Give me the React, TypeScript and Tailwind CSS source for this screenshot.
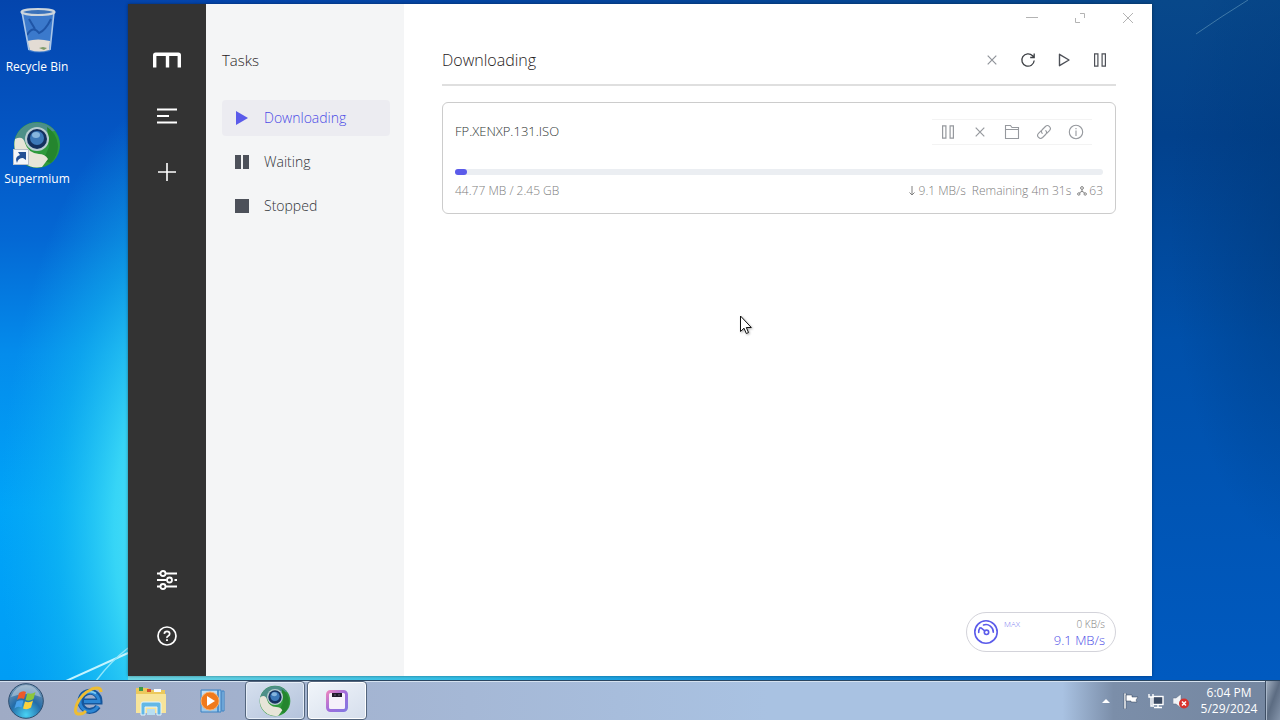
import React from "react";

type IconProps = { className?: string };

const Wallpaper: React.FC = () => (
  <svg
    className="absolute inset-0 size-full"
    viewBox="0 0 1280 680"
    preserveAspectRatio="none"
    aria-hidden="true"
  >
    <defs>
      <linearGradient id="sky" x1="0" y1="0" x2="0" y2="1">
        <stop offset="0" stopColor="#0445ad" />
        <stop offset="0.2" stopColor="#0456c4" />
        <stop offset="0.35" stopColor="#0468d4" />
        <stop offset="0.52" stopColor="#048cec" />
        <stop offset="0.75" stopColor="#00a4f8" />
        <stop offset="1" stopColor="#009df5" />
      </linearGradient>
      <linearGradient id="sky-right" x1="0" y1="0" x2="0" y2="1">
        <stop offset="0" stopColor="#08488a" />
        <stop offset="0.2" stopColor="#02418c" />
        <stop offset="0.5" stopColor="#0050aa" />
        <stop offset="1" stopColor="#005ac0" />
      </linearGradient>
      <linearGradient id="fade" x1="0" y1="0" x2="1" y2="0">
        <stop offset="0.15" stopColor="#000" />
        <stop offset="0.9" stopColor="#fff" />
      </linearGradient>
      <mask id="right-mask">
        <rect width="1280" height="680" fill="url(#fade)" />
      </mask>
      <radialGradient
        id="glow"
        gradientUnits="userSpaceOnUse"
        cx="0"
        cy="0"
        r="1"
        gradientTransform="translate(190 530) scale(190 440)"
      >
        <stop offset="0" stopColor="#6cf0f8" />
        <stop offset="0.4" stopColor="#40def6" stopOpacity="0.85" />
        <stop offset="0.7" stopColor="#18c0f0" stopOpacity="0.45" />
        <stop offset="1" stopColor="#10b0f0" stopOpacity="0" />
      </radialGradient>
      <radialGradient
        id="shade"
        gradientUnits="userSpaceOnUse"
        cx="0"
        cy="0"
        r="1"
        gradientTransform="translate(1300 220) scale(130 330)"
      >
        <stop offset="0" stopColor="#003878" stopOpacity="0.6" />
        <stop offset="1" stopColor="#003878" stopOpacity="0" />
      </radialGradient>
      <linearGradient id="strip" x1="0" y1="0" x2="1" y2="0">
        <stop offset="0" stopColor="#6fd8e4" />
        <stop offset="0.4" stopColor="#2cbce8" />
        <stop offset="1" stopColor="#1080d8" stopOpacity="0" />
      </linearGradient>
    </defs>
    <rect width="1280" height="680" fill="url(#sky)" />
    <rect width="1280" height="680" fill="url(#sky-right)" mask="url(#right-mask)" />
    <rect width="640" height="680" fill="url(#glow)" />
    <rect x="1100" width="180" height="680" fill="url(#shade)" />
    <path d="M66 681 128 653" stroke="#c4f4ff" strokeWidth="2" />
    <path d="M96 681Q110 662 128 648" stroke="#8fe6fb" strokeWidth="1.5" fill="none" />
    <path d="M1196 34Q1222 16 1248 0" stroke="#3f79a8" strokeWidth="1" fill="none" />
    <rect x="128" y="676" width="900" height="4" fill="url(#strip)" />
  </svg>
);

const RecycleBin: React.FC<IconProps> = ({ className }) => (
  <svg className={className} viewBox="0 0 48 48" aria-hidden="true">
    <path d="M9 6h32l-4 40q-11 3-21 0z" fill="#4a86d2" opacity="0.8" />
    <path d="M14 36q11-3 23 0l-1 9q-10 3-19 0z" fill="#e3dcd4" />
    <path d="M14 30q6-10 12-2 6-2 12-14M16 14l6 10" stroke="#1f55a6" strokeWidth="2" fill="none" />
    <path d="m26 43 4-1 4 1-3 2z" fill="#7f9a68" />
    <path d="M9 7 16 45M41 7l-4 38" stroke="#a9c6e8" strokeWidth="1.6" />
    <ellipse cx="25" cy="7" rx="16.5" ry="3" fill="#3a72ba" stroke="#ccd5dc" strokeWidth="2.2" />
  </svg>
);

const SupermiumLogo: React.FC<IconProps> = ({ className }) => (
  <svg className={className} viewBox="0 0 48 48" aria-hidden="true">
    <circle cx="24" cy="24" r="23" fill="#2f9a3c" />
    <path d="M2 18A23 23 0 0 1 42 10L24 12 10 24z" fill="#4d8f88" />
    <path d="M34 6a23 23 0 0 1 4 36L30 40l6-14z" fill="#24852e" />
    <path d="M2 18q8-4 10 4 3 10 14 11 6 0 9 5l-6 8A23 23 0 0 1 2 18z" fill="#e7e5d8" />
    <circle cx="24" cy="18" r="12" fill="#b9cdd2" />
    <circle cx="24" cy="18" r="10" fill="#14305e" />
    <circle cx="24" cy="17" r="7" fill="#3c78b8" />
    <ellipse cx="23" cy="14" rx="4" ry="3" fill="#86b5de" />
  </svg>
);

const ShortcutArrow: React.FC<IconProps> = ({ className }) => (
  <svg className={className} viewBox="0 0 16 16" aria-hidden="true">
    <rect x="0.5" y="0.5" width="15" height="15" fill="#f3f6fa" stroke="#b9c0c8" />
    <path d="M4 14q-3-6 3-8L5 3h8v8l-3-2q-5 0-6 5z" fill="#234f94" />
  </svg>
);

const MotrixLogo: React.FC = () => (
  <svg className="h-4 w-7" viewBox="0 0 28 16" fill="none" stroke="#fff" strokeWidth="3.4" aria-hidden="true">
    <path d="M1.700 15.500V3.200q0-1 1-1h22.600q1 0 1 1v12.300M14.500 2.200v13.300" />
  </svg>
);

const MenuIcon: React.FC = () => (
  <svg className="size-5" viewBox="0 0 20 20" stroke="#fff" strokeWidth="1.8" aria-hidden="true">
    <path d="M0 3.5h20M0 10h12M0 16.500h20" />
  </svg>
);

const PlusIcon: React.FC = () => (
  <svg className="size-5" viewBox="0 0 20 20" stroke="#fff" strokeWidth="1.6" aria-hidden="true">
    <path d="M1 10h18M10 1v18" />
  </svg>
);

const SlidersIcon: React.FC = () => (
  <svg className="size-5" viewBox="0 0 20 20" fill="none" stroke="#fff" strokeWidth="1.8" aria-hidden="true">
    <path d="M0 3.500h3M9 3.500h11M0 10h9.500M17.500 10H20M0 16.500h3M9 16.500h11" />
    <circle cx="6" cy="3.500" r="2.500" />
    <circle cx="12.500" cy="10" r="2.500" />
    <circle cx="6" cy="16.500" r="2.500" />
  </svg>
);

const HelpIcon: React.FC = () => (
  <svg className="size-5" viewBox="0 0 20 20" fill="none" stroke="#fff" strokeWidth="1.7" aria-hidden="true">
    <circle cx="10" cy="10" r="9" />
    <path d="M7.300 7.900q.2-2.500 2.700-2.500t2.700 2.300q0 1.400-1.500 2.200T10 12" />
    <path d="M10 13.300v1.700" strokeWidth="1.900" />
  </svg>
);

const PauseOutline: React.FC<IconProps> = ({ className }) => (
  <svg className={className} viewBox="0 0 16 16" fill="none" stroke="currentColor" strokeWidth="1.2" aria-hidden="true">
    <path d="M2.600 1.800h3.300v12.400H2.600zM10.100 1.800h3.300v12.400h-3.300z" />
  </svg>
);

const CrossIcon: React.FC<IconProps> = ({ className }) => (
  <svg className={className} viewBox="0 0 16 16" stroke="currentColor" strokeWidth="1.2" aria-hidden="true">
    <path d="m3.700 3.700 8.600 8.600M12.300 3.700l-8.600 8.600" />
  </svg>
);

const RefreshIcon: React.FC<IconProps> = ({ className }) => (
  <svg className={className} viewBox="0 0 16 16" fill="none" stroke="currentColor" strokeWidth="1.300" aria-hidden="true">
    <path d="M14.200 8.500A6.200 6.200 0 1 1 12.600 3.800L14 5.300M14.200 1.500v4h-4" />
  </svg>
);

const PlayOutline: React.FC<IconProps> = ({ className }) => (
  <svg className={className} viewBox="0 0 16 16" fill="none" stroke="currentColor" strokeWidth="1.400" strokeLinejoin="round" aria-hidden="true">
    <path d="M3.500 2.300 13 8l-9.500 5.700z" />
  </svg>
);

const FolderIcon: React.FC<IconProps> = ({ className }) => (
  <svg className={className} viewBox="0 0 16 16" fill="none" stroke="currentColor" strokeWidth="1.100" aria-hidden="true">
    <path d="M1.500 14.500v-13h5l1.500 2h6.500v11zM1.500 5.500h13" />
  </svg>
);

const LinkIcon: React.FC<IconProps> = ({ className }) => (
  <svg className={className} viewBox="0 0 16 16" fill="none" stroke="currentColor" strokeWidth="1.100" strokeLinecap="round" aria-hidden="true">
    <path d="M6.200 9.400a2.900 2.900 0 0 1 .2-3.900l3-3a2.900 2.900 0 0 1 4.100 4.100L11 9.100" />
    <path d="M9.800 6.600a2.900 2.900 0 0 1-.2 3.900l-3 3a2.900 2.900 0 0 1-4.100-4.100L5 6.900" />
  </svg>
);

const InfoIcon: React.FC<IconProps> = ({ className }) => (
  <svg className={className} viewBox="0 0 16 16" fill="none" stroke="currentColor" strokeWidth="1.100" aria-hidden="true">
    <circle cx="8" cy="8" r="6.700" />
    <path d="M8 4v1.200M8 6.500v5.500" />
  </svg>
);

const ArrowDownIcon: React.FC = () => (
  <svg className="size-2.5" viewBox="0 0 10 10" fill="none" stroke="currentColor" aria-hidden="true">
    <path d="M5 0v9M2.500 6.500 5 9l2.500-2.500" />
  </svg>
);

const PeersIcon: React.FC = () => (
  <svg className="size-2.5" viewBox="0 0 10 10" fill="none" stroke="currentColor" aria-hidden="true">
    <circle cx="5" cy="2" r="1.400" />
    <circle cx="1.800" cy="8" r="1.200" />
    <circle cx="8.200" cy="8" r="1.200" />
    <path d="M5 3.500v2M2.400 6.800 5 5.300l2.600 1.500" />
  </svg>
);

const GaugeIcon: React.FC = () => (
  <svg className="size-6" viewBox="0 0 24 24" fill="none" stroke="#5b5bea" strokeWidth="1.600" strokeLinecap="round" aria-hidden="true">
    <circle cx="12" cy="12" r="11.200" />
    <path d="M4.700 12.500A7.400 7.400 0 0 1 6 7.800M9.500 5a7.400 7.400 0 0 1 9.800 7.300M7 7.800l3.800 3" />
    <circle cx="12.500" cy="12.300" r="2.200" />
  </svg>
);

const StartOrb: React.FC = () => (
  <svg className="size-9" viewBox="0 0 36 36" aria-hidden="true">
    <defs>
      <radialGradient id="orb" cx="0.5" cy="0.9" r="0.9">
        <stop offset="0" stopColor="#48d2f4" />
        <stop offset="0.5" stopColor="#246ca8" />
        <stop offset="1" stopColor="#7e9db8" />
      </radialGradient>
    </defs>
    <circle cx="18" cy="18" r="17.300" fill="url(#orb)" stroke="#2d4d6e" />
    <path d="M3 14Q8 2 18 2t15 12Q18 8 3 14z" fill="#fff" opacity="0.35" />
    <path d="M11 10q4-3 7-1l-2 7q-4-2-7 1z" fill="#ee5a28" />
    <path d="M19.500 10q4 2 8-1l-2 7q-4 3-8 1z" fill="#8cc63c" />
    <path d="M8.500 18.500q4-2 7-1l-2 7q-4-2-7 1z" fill="#4aa2ea" />
    <path d="M17 18.500q4 2 8-1l-2 7q-4 3-8 1z" fill="#fcd23c" />
  </svg>
);

const ExplorerLogo: React.FC = () => (
  <svg className="size-8" viewBox="0 0 32 32" fill="none" aria-hidden="true">
    <path d="M25 21.500a9.500 9.500 0 1 1 1.500-5H10" stroke="#15569c" strokeWidth="6" />
    <path d="M25 21a9.500 9.500 0 1 1 1-4.500H11" stroke="#2c86d4" strokeWidth="3" />
    <path d="M23 8.500A10 10 0 0 0 9 11" stroke="#7cccf4" strokeWidth="1.600" />
    <path d="M28 7Q28 1 19 4 8 9 4 19q-4 11 3 10 3 0 6-3" stroke="#eebd32" strokeWidth="3" />
  </svg>
);

const FolderStack: React.FC = () => (
  <svg className="size-8" viewBox="0 0 32 32" aria-hidden="true">
    <path d="M1 3h12l2 2h15v23H1z" fill="#ecc95c" />
    <path d="M4 2h4v4H4z" fill="#3c9a4a" />
    <path d="M12 4h4v3h-4z" fill="#d6502c" />
    <path d="M19 4h7v3h-7z" fill="#f8fbff" />
    <path d="M1 9h30v19H1z" fill="#f7e49a" />
    <path d="M6 30V19q0-2 2-2h16q2 0 2 2v11h-4v-8H10v8z" fill="#62b8e6" stroke="#e3f4fc" />
    <path d="M12 24h8v6h-8z" fill="#b8dff2" />
  </svg>
);

const MediaPlayer: React.FC = () => (
  <svg className="size-7" viewBox="0 0 28 28" aria-hidden="true">
    <path d="M2 3h17v22H2zM19 3h3v22h-3zM23 4h2v20h-2z" fill="#9cc8ea" stroke="#3b82c4" />
    <path d="M3 4h15v6H3z" fill="#c2def4" />
    <circle cx="11" cy="14" r="9" fill="#f07a1c" stroke="#fbb06a" />
    <path d="m8 9 8 5-8 5z" fill="#fff" />
  </svg>
);

const MotrixTile: React.FC = () => (
  <svg className="size-6" viewBox="0 0 24 24" aria-hidden="true">
    <defs>
      <linearGradient id="motrix" x1="0" y1="0" x2="1" y2="1">
        <stop offset="0" stopColor="#e884c0" />
        <stop offset="0.5" stopColor="#a06cdc" />
        <stop offset="1" stopColor="#8478e0" />
      </linearGradient>
    </defs>
    <rect x="2.500" y="2.500" width="19" height="19" rx="3" fill="#f6f1fa" stroke="url(#motrix)" strokeWidth="3" />
    <path d="M7 4h10v4H7z" fill="#231c2c" />
    <path d="M9 6h2M13 6h2" stroke="#6b6376" />
  </svg>
);

const tasks = [
  {
    label: "Downloading",
    active: true,
    shape: <path d="M2 1v14l12-7z" />,
  },
  {
    label: "Waiting",
    active: false,
    shape: <path d="M1 1h6v14H1zM9 1h6v14H9z" />,
  },
  {
    label: "Stopped",
    active: false,
    shape: <path d="M1 1h14v14H1z" />,
  },
];

const headerActions = [
  { label: "Delete selected", color: "text-[#8f9399]", icon: <CrossIcon className="size-4" /> },
  { label: "Refresh", color: "text-[#3d4045]", icon: <RefreshIcon className="size-4" /> },
  { label: "Resume all", color: "text-[#4d5057]", icon: <PlayOutline className="size-4" /> },
  { label: "Pause all", color: "text-[#4d5057]", icon: <PauseOutline className="size-4" /> },
];

const taskActions = [
  { label: "Pause", icon: <PauseOutline className="size-4" /> },
  { label: "Remove", icon: <CrossIcon className="size-4" /> },
  { label: "Open folder", icon: <FolderIcon className="size-4" /> },
  { label: "Copy link", icon: <LinkIcon className="size-4" /> },
  { label: "Details", icon: <InfoIcon className="size-4" /> },
];

const DesktopIcons: React.FC = () => (
  <div className="flex w-32 shrink-0 flex-col items-start gap-11 pt-px text-xs text-white [text-shadow:1px_1px_2px_#000]">
    <button className="flex w-[74px] flex-col items-center gap-1">
      <RecycleBin className="size-12" />
      <span className="leading-5">Recycle Bin</span>
    </button>
    <button className="flex w-[74px] flex-col items-center">
      <span className="relative">
        <SupermiumLogo className="size-12" />
        <ShortcutArrow className="absolute bottom-1 left-0 size-4" />
      </span>
      <span className="leading-5">Supermium</span>
    </button>
  </div>
);

const Sidebar: React.FC = () => (
  <aside className="flex w-[78px] shrink-0 flex-col items-center justify-between bg-[#333] pt-10 pb-6">
    <div className="flex flex-col items-center gap-6">
      <button aria-label="Motrix" className="flex size-8 items-center justify-center">
        <MotrixLogo />
      </button>
      <button aria-label="Task list" className="flex size-8 items-center justify-center">
        <MenuIcon />
      </button>
      <button aria-label="Add task" className="flex size-8 items-center justify-center">
        <PlusIcon />
      </button>
    </div>
    <div className="flex flex-col items-center gap-6">
      <button aria-label="Preferences" className="flex size-8 items-center justify-center">
        <SlidersIcon />
      </button>
      <button aria-label="Help" className="flex size-8 items-center justify-center">
        <HelpIcon />
      </button>
    </div>
  </aside>
);

const TaskNav: React.FC = () => (
  <nav className="w-[198px] shrink-0 bg-[#f4f5f6] pt-11 pr-3.5 pl-4">
    <h2 className="text-[15px] leading-6 text-[#1f2022]">Tasks</h2>
    <ul className="mt-7 flex flex-col gap-2">
      {tasks.map((task) => (
        <li key={task.label}>
          <button
            className={`flex h-9 w-full items-center gap-3.5 rounded-sm px-3 text-sm ${
              task.active ? "bg-[#ececf1] text-[#4b4be6]" : "text-[#303338]"
            }`}
          >
            <svg
              className={`size-4 ${task.active ? "text-[#5b5bea]" : "text-[#4d515a]"}`}
              viewBox="0 0 16 16"
              fill="currentColor"
              aria-hidden="true"
            >
              {task.shape}
            </svg>
            {task.label}
          </button>
        </li>
      ))}
    </ul>
  </nav>
);

const DownloadCard: React.FC = () => {
  const percent = 1.8;

  return (
    <article className="mt-4 rounded-md border border-[#ccc] px-3 pt-4 pb-3">
      <div className="flex h-[26px] items-center justify-between">
        <h3 className="text-[13px] text-[#303533]">FP.XENXP.131.ISO</h3>
        <div className="mr-[11px] flex h-full items-center border-y border-[#f3f3f3] text-[#96999e]">
          {taskActions.map((action) => (
            <button key={action.label} aria-label={action.label} className="flex w-8 justify-center">
              {action.icon}
            </button>
          ))}
        </div>
      </div>
      <div className="mt-6 h-1.5 rounded-full bg-[#ebeef2]">
        <div
          className="h-full rounded-full bg-[#5b5bea]"
          style={{ width: `${percent}%` }}
        />
      </div>
      <div className="mt-1.5 flex items-center justify-between text-xs leading-5 text-[#808080]">
        <span>44.77 MB / 2.45 GB</span>
        <div className="flex items-center gap-1.5">
          <span className="flex items-center gap-0.5">
            <ArrowDownIcon />
            9.1 MB/s
          </span>
          <span>Remaining 4m 31s</span>
          <span className="flex items-center gap-0.5">
            <PeersIcon />
            63
          </span>
        </div>
      </div>
    </article>
  );
};

const WindowControls: React.FC = () => (
  <div className="flex h-7 shrink-0 justify-end text-[#b3b3b3]">
    <button aria-label="Minimize" className="flex w-12 items-center justify-center">
      <svg className="size-3" viewBox="0 0 12 12" stroke="currentColor" aria-hidden="true">
        <path d="M0 5.500h12" />
      </svg>
    </button>
    <button aria-label="Maximize" className="flex w-12 items-center justify-center">
      <svg className="size-3" viewBox="0 0 12 12" fill="none" stroke="currentColor" aria-hidden="true">
        <path d="M6 1.500h4.500V6M1.500 6v4.500H6" />
      </svg>
    </button>
    <button aria-label="Close" className="flex w-12 items-center justify-center">
      <svg className="size-3" viewBox="0 0 12 12" stroke="currentColor" aria-hidden="true">
        <path d="m1 1 10 10M11 1 1 11" />
      </svg>
    </button>
  </div>
);

const SpeedMeter: React.FC = () => (
  <button className="flex h-10 w-[150px] items-center gap-1.5 self-end rounded-full border border-[#d3d3da] bg-white pr-2.5 pl-[7px]">
    <GaugeIcon />
    <span className="flex flex-1 flex-col">
      <span className="flex items-center justify-between leading-4">
        <span className="text-[8px] text-[#7878f0]">MAX</span>
        <span className="text-[10px] text-[#808080]">0 KB/s</span>
      </span>
      <span className="text-right text-[13px] leading-4 text-[#4b4be6]">9.1 MB/s</span>
    </span>
  </button>
);

const MotrixWindow: React.FC = () => (
  <div className="flex min-w-0 flex-1 font-light shadow-[0_0_3px_#0006]">
    <Sidebar />
    <TaskNav />
    <main className="flex min-w-0 flex-1 flex-col bg-white">
      <WindowControls />
      <div className="flex flex-1 flex-col justify-between pr-9 pb-6 pl-[38px]">
        <section>
          <header className="flex h-[54px] items-center justify-between border-b-2 border-[#dfdfdf] pt-1">
            <h1 className="text-base text-[#1f2022]">Downloading</h1>
            <div className="flex gap-1">
              {headerActions.map((action) => (
                <button
                  key={action.label}
                  aria-label={action.label}
                  className={`flex size-8 items-center justify-center ${action.color}`}
                >
                  {action.icon}
                </button>
              ))}
            </div>
          </header>
          <DownloadCard />
        </section>
        <SpeedMeter />
      </div>
    </main>
  </div>
);

const Taskbar: React.FC = () => (
  <footer className="relative flex h-10 shrink-0 items-stretch justify-between border-t border-[#2a4560] bg-[linear-gradient(90deg,#9fabc5_0%,#a3b3d0_25%,#a9c2e2_60%,#a9c2e2_83%,#7b8ea9_87%,#7486a0_100%)] shadow-[inset_0_1px_0_#d5e2f0]">
    <div className="flex gap-0.5">
      <button aria-label="Start" className="flex w-[57px] items-center pl-2">
        <StartOrb />
      </button>
      <button aria-label="Internet Explorer" className="flex w-15 items-center justify-center">
        <ExplorerLogo />
      </button>
      <button aria-label="Windows Explorer" className="flex w-15 items-center justify-center">
        <FolderStack />
      </button>
      <button aria-label="Windows Media Player" className="flex w-15 items-center justify-center">
        <MediaPlayer />
      </button>
      <button
        aria-label="Supermium"
        className="flex w-15 items-center justify-center rounded-sm border border-[#53657d] bg-linear-to-br from-[#d6e0ee] to-[#b4c3dc] shadow-[inset_0_0_0_1px_#e6eef8]"
      >
        <SupermiumLogo className="size-8" />
      </button>
      <button
        aria-label="Motrix"
        className="flex w-15 items-center justify-center rounded-sm border border-[#53657d] bg-linear-to-br from-[#f1f5fa] to-[#d5deec] shadow-[inset_0_0_0_1px_#fff]"
      >
        <MotrixTile />
      </button>
    </div>
    <div className="flex text-white">
      <button aria-label="Show hidden icons" className="flex w-[25px] items-center justify-center">
        <svg className="size-2" viewBox="0 0 8 8" fill="#fff" aria-hidden="true">
          <path d="M4 2 8 6H0z" />
        </svg>
      </button>
      <button aria-label="Action Center" className="flex w-[25px] items-center justify-center">
        <svg className="size-4" viewBox="0 0 16 16" fill="#fff" stroke="#33435a" strokeWidth="0.500" aria-hidden="true">
          <path d="M1 0h2v16H1zM3 2h6v2h6l-2 3 1 2H8V8H3z" />
        </svg>
      </button>
      <button aria-label="Network" className="flex w-[25px] items-center justify-center">
        <svg className="size-4" viewBox="0 0 16 16" fill="none" stroke="#fff" strokeWidth="1.400" aria-hidden="true">
          <rect x="5" y="3.500" width="10" height="8" fill="#3c4c64" />
          <path d="M10 11.500V14M6 14.500h8M1 1v3h4V1M3 4v9h3" />
        </svg>
      </button>
      <button aria-label="Volume muted" className="flex w-[25px] items-center justify-center">
        <svg className="size-4" viewBox="0 0 16 16" aria-hidden="true">
          <path d="M0 5h3l5-4v14l-5-4H0z" fill="#f2f4f7" stroke="#5a6a80" strokeWidth="0.500" />
          <circle cx="11" cy="10.500" r="5" fill="#d8322c" />
          <path d="m9 8.500 4 4M13 8.500l-4 4" stroke="#fff" strokeWidth="1.500" />
        </svg>
      </button>
      <time className="flex w-[72px] flex-col justify-center text-center text-xs leading-4">
        <span>6:04 PM</span>
        <span>5/29/2024</span>
      </time>
      <button
        aria-label="Show desktop"
        className="w-[15px] border-l border-[#3e4e64] bg-linear-to-br from-[#a4b1c2] via-[#5c6c82] to-[#8494aa] shadow-[inset_1px_0_0_#a9b7c9]"
      />
    </div>
  </footer>
);

const App: React.FC = () => {
  return (
    <div className="relative flex min-h-screen flex-col font-['Open_Sans','Noto_Sans',sans-serif]">
      <div className="relative flex flex-1">
        <Wallpaper />
        <div className="relative flex flex-1 pt-1 pr-32 pb-1">
          <DesktopIcons />
          <MotrixWindow />
        </div>
      </div>
      <Taskbar />

      {/* Mouse pointer */}
      <svg
        className="pointer-events-none absolute top-[315px] left-[740px] h-5 w-3 drop-shadow-[1px_1px_1px_#0005]"
        viewBox="0 0 12 20"
        fill="#fff"
        stroke="#111"
        aria-hidden="true"
      >
        <path d="M.5 1v15.500L4 13.200l2.300 5.300 2.200-1L6.300 12.500h5z" />
      </svg>
    </div>
  );
};

export default App;
